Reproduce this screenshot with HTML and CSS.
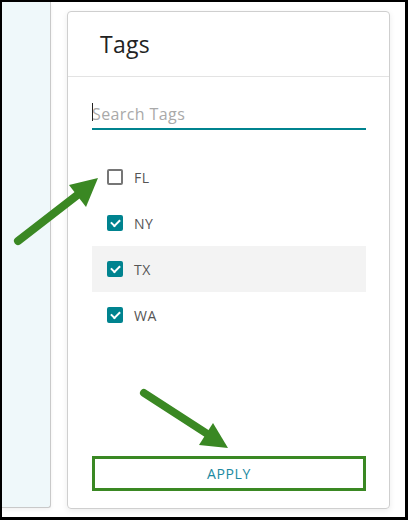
FILE: index.html
```html
<!DOCTYPE html>
<html lang="en">
<head>
  <meta charset="UTF-8">
  <title>Tags Filter</title>
  <link rel="stylesheet" href="styles.css">
</head>
<body>
  <div class="frame">
    <aside class="side-panel"></aside>

    <section class="tag-card">
      <header class="tag-card-head">
        <h2>Tags</h2>
      </header>

      <div class="tag-card-body">
        <label class="search">
          <input type="text" placeholder="Search Tags">
        </label>

        <ul class="tag-list">
          <li class="tag"><span class="box"></span>FL</li>
          <li class="tag"><span class="box checked"></span>NY</li>
          <li class="tag hover"><span class="box checked"></span>TX</li>
          <li class="tag"><span class="box checked"></span>WA</li>
        </ul>

        <button class="apply">APPLY</button>
      </div>
    </section>
  </div>

  <svg class="callouts" width="408" height="520" viewBox="0 0 408 520">
    <line x1="18" y1="241" x2="80" y2="193" />
    <polygon points="98,178 69,185 86,207" />
    <line x1="144" y1="393" x2="209" y2="435" />
    <polygon points="228,448 199,445 213,423" />
  </svg>
</body>
</html>
```

FILE: styles.css
```css
body {
  margin: 0;
  position: relative;
  font-family: "Open Sans", Arial, sans-serif;
}

.frame {
  box-sizing: border-box;
  width: 408px;
  height: 520px;
  border-style: solid;
  border-color: #000;
  border-width: 2px 3px 3px 2px;
  background: #fff;
  display: flex;
  align-items: flex-start;
}

.side-panel {
  width: 48px;
  height: 505px;
  background: #eff8fa;
  border-right: 1px solid #c9c9c9;
  border-bottom: 1px solid #c9c9c9;
  border-bottom-right-radius: 3px;
  box-shadow: 0 2px 4px rgba(0, 0, 0, 0.06);
}

.tag-card {
  box-sizing: border-box;
  width: 323px;
  height: 498px;
  margin: 9px 0 0 16px;
  border: 1px solid #cfcfcf;
  border-radius: 4px;
  box-shadow: 0 2px 6px rgba(0, 0, 0, 0.08);
  display: flex;
  flex-direction: column;
}

.tag-card-head {
  height: 64px;
  border-bottom: 1px solid #e3e3e3;
  padding-left: 32px;
  display: flex;
  align-items: center;
}

.tag-card-head h2 {
  margin: 0;
  font-size: 23px;
  font-weight: 500;
  letter-spacing: 0.3px;
  color: #222;
}

.tag-card-body {
  flex: 1;
  padding: 22px 23px 17px 24px;
  display: flex;
  flex-direction: column;
}

.search {
  display: block;
  border-bottom: 2px solid #00838f;
  height: 29px;
  position: relative;
}

.search::before {
  content: "";
  position: absolute;
  left: 0;
  top: 4px;
  width: 1px;
  height: 18px;
  background: #222;
}

.search input {
  box-sizing: border-box;
  width: 100%;
  border: none;
  outline: none;
  padding: 2px 0 0;
  font-family: inherit;
  font-size: 16px;
  letter-spacing: 0.4px;
  height: 28px;
  background: transparent;
}

.search input::placeholder {
  color: #a9a9a9;
}

.tag-list {
  list-style: none;
  margin: 24px 0 0;
  padding: 0;
}

.tag {
  height: 46px;
  display: flex;
  align-items: center;
  padding-left: 15px;
  font-size: 14px;
  letter-spacing: 0.5px;
  color: #555;
}

.tag.hover {
  background: #f3f3f3;
}

.box {
  box-sizing: border-box;
  width: 16px;
  height: 16px;
  margin-right: 11px;
  border: 2px solid #767676;
  border-radius: 2px;
  position: relative;
}

.box.checked {
  background: #00838f;
  border-color: #00838f;
}

.box.checked::after {
  content: "";
  position: absolute;
  left: 2px;
  top: 0;
  width: 7px;
  height: 4px;
  border-left: 2px solid #fff;
  border-bottom: 2px solid #fff;
  transform: translate(0, 2px) rotate(-45deg);
}

.apply {
  margin-top: auto;
  height: 35px;
  width: 274px;
  border: 3px solid #3a8823;
  background: #fff;
  color: #1b8aa2;
  font-family: inherit;
  font-size: 14px;
  letter-spacing: 0.6px;
  cursor: pointer;
}

.callouts {
  position: absolute;
  left: 0;
  top: 0;
  pointer-events: none;
}

.callouts line {
  stroke: #3a8823;
  stroke-width: 8;
  stroke-linecap: round;
}

.callouts polygon {
  fill: #3a8823;
}
```
